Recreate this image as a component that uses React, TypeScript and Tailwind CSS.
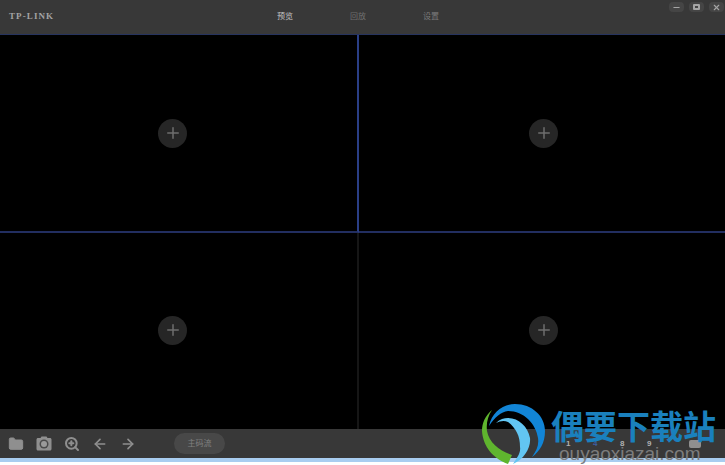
import { Folder, ZoomIn, ArrowLeft, ArrowRight, Plus, Minus, X } from 'lucide-react'

const cells = [
  'border-r-2 border-b-2 border-r-[#2a3f86] border-b-[#222e60] pr-[12px]',
  'border-b-2 border-b-[#222e60] pl-[3px]',
  'border-r-2 border-r-[#161616] pr-[12px] pb-[2px]',
  'pl-[3px] pb-[2px]',
]

function Cell({ border }: { border: string }) {
  return (
    <div className={`flex items-center justify-center bg-black ${border}`}>
      <div className="flex h-[29px] w-[29px] items-center justify-center rounded-full bg-[#262626]">
        <Plus size={18} strokeWidth={2} color="#6e6e6e" />
      </div>
    </div>
  )
}

function CameraIcon() {
  return (
    <svg width="16" height="15" viewBox="0.500 0 16 15">
      <path d="M1 3.5C1 2.7 1.7 2 2.5 2H5L6 .5H11L12 2H14.5C15.3 2 16 2.7 16 3.5V13C16 13.8 15.3 14.5 14.5 14.5H2.5C1.7 14.5 1 13.800 1 13Z" fill="#8f8f8f" />
      <circle cx="8.500" cy="8" r="4.500" fill="#4a4a4a" />
      <circle cx="8.500" cy="8" r="3" fill="#9a9a9a" />
    </svg>
  )
}

function Logo() {
  return (
    <svg width="80" height="67" viewBox="475 398 80 67" className="absolute left-[475px] top-[398px]">
      <path d="M489 426C492 412 503 404 515 404C532 404 545 416 545 431C545 443 540 451 532 457C537 450 539 445 538 438C536 424 524 411 508 411C501 412 495 417 489 426Z" fill="#1285d6" />
      <path d="M496 423C500 419 504 418 508 418C519 418 528 427 530 438C531 448 524 459 513 464C517 458 521 453 520 447C520 436 516 428 508 422C504 420 500 421 496 423Z" fill="#62c5f2" />
      <path d="M492 410C485 416 482 423 482 431C483 447 494 459 508 464L512 455C500 451 489 443 487 431C486 423 488 416 492 410Z" fill="#5fb52e" />
    </svg>
  )
}

export default function App() {
  return (
    <div className="relative flex h-[465px] w-[725px] flex-col overflow-hidden bg-white font-['Liberation_Sans','Noto_Sans_CJK_SC',sans-serif]">
      <header className="relative flex h-[35px] shrink-0 items-center border-b border-[#27345f] bg-[#383838]">
        <span className="absolute left-[9px] top-[10px] font-['Liberation_Serif',serif] text-[9px] font-bold tracking-[1.1px] text-[#a3a3a3]">TP-LINK</span>
        <nav className="absolute left-[277px] top-[11px] flex gap-[57px] text-[8px] leading-[12px]">
          <span className="text-[#c4c4c4]">预览</span>
          <span className="text-[#6f6f6f]">回放</span>
          <span className="text-[#7a7a7a]">设置</span>
        </nav>
        <div className="absolute left-[669px] top-[2px] flex gap-[5px]">
          <div className="flex h-[10px] w-[15px] items-center justify-center rounded-sm bg-[#454545]">
            <Minus size={9} strokeWidth={3} color="#a5a5a5" />
          </div>
          <div className="flex h-[10px] w-[15px] items-center justify-center rounded-sm bg-[#454545]">
            <div className="h-[6px] w-[7px] rounded-[1px] border-2 border-[#a5a5a5]" />
          </div>
          <div className="flex h-[10px] w-[15px] items-center justify-center rounded-sm bg-[#454545]">
            <X size={9} strokeWidth={3} color="#a5a5a5" />
          </div>
        </div>
      </header>
      <main className="grid h-[394px] shrink-0 grid-cols-[359px_366px] grid-rows-[198px_196px]">
        {cells.map((border, i) => (
          <Cell key={i} border={border} />
        ))}
      </main>
      <footer className="flex h-[29px] shrink-0 items-center bg-[#383838] pl-[8px]">
        <div className="flex items-center gap-[12px] text-[#8f8f8f]">
          <Folder size={16} fill="#8f8f8f" strokeWidth={1.5} />
          <CameraIcon />
          <ZoomIn size={16} strokeWidth={3} />
          <ArrowLeft size={16} strokeWidth={2.5} />
          <ArrowRight size={16} strokeWidth={2.500} />
        </div>
        <div className="ml-[38px] flex h-[21px] w-[51px] items-center justify-center rounded-full bg-[#484848] text-[8px] text-[#808080]">主码流</div>
        <div className="ml-auto mr-[23px] flex items-center text-[8px] font-bold text-[#b0b0b0]">
          <span className="w-[27px]">1</span>
          <span className="w-[27px] text-[#3d5f9e]">4</span>
          <span className="w-[27px]">8</span>
          <span className="w-[41px]">9</span>
          <svg width="14" height="10" viewBox="0 0 14 10">
            <rect x="1" y="1" width="12" height="8" rx="2" fill="#8f8f8f" />
          </svg>
        </div>
      </footer>
      <div className="h-[4px] shrink-0 bg-[#a9cdf0]" />
      <Logo />
      <div className="absolute left-[551px] top-[409px] text-[33px] font-bold leading-[38px] whitespace-nowrap text-[#1a80bd]">偶要下载站</div>
      <div className="absolute left-[559px] top-[443px] text-[19px] leading-[22px] whitespace-nowrap text-[#7d7d7d]">ouyaoxiazai.com</div>
    </div>
  )
}
